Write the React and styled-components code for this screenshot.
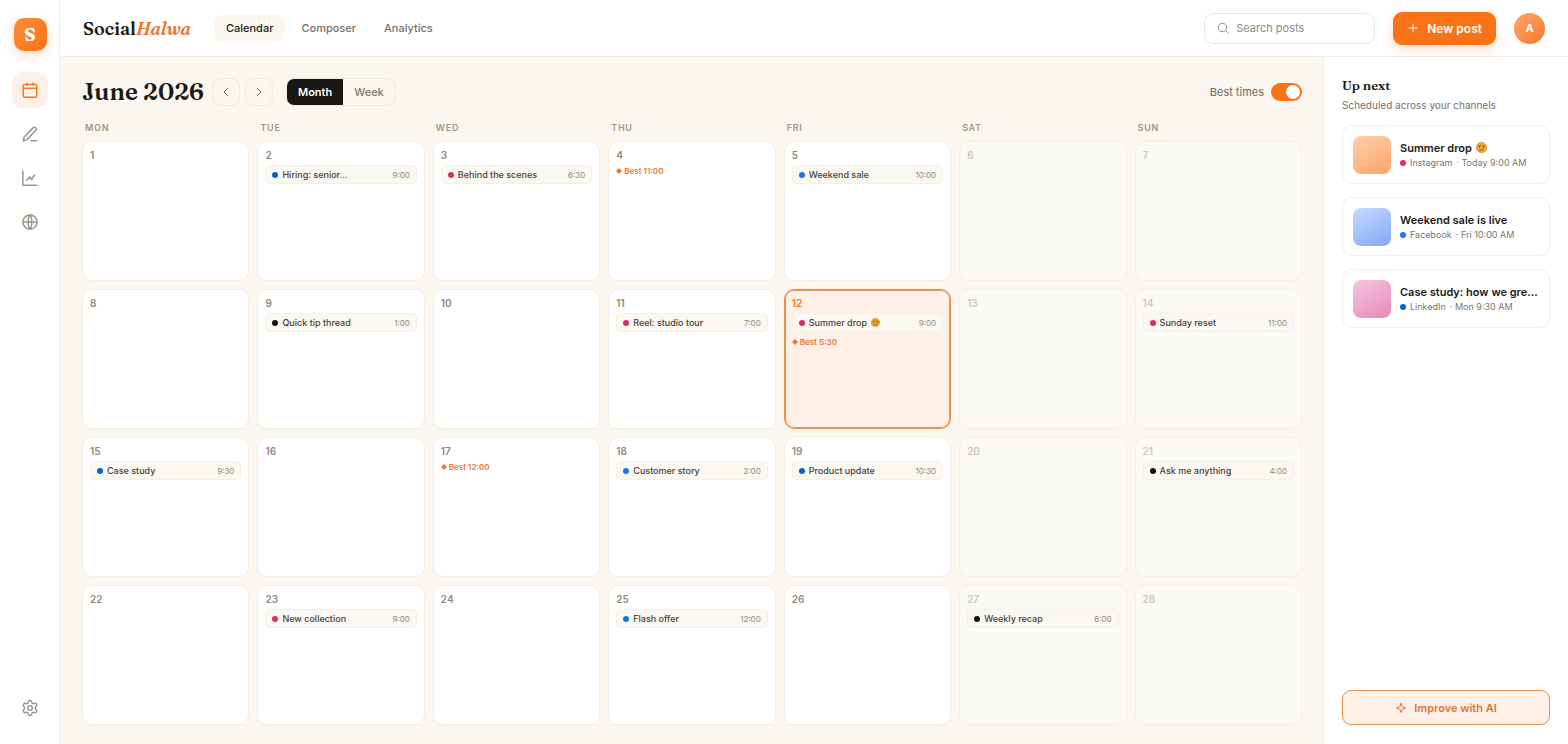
import styled, { createGlobalStyle, css } from "styled-components"
import { Settings } from "lucide-react"

const WEEKDAYS = ["Mon", "Tue", "Wed", "Thu", "Fri", "Sat", "Sun"]

const CHANNELS = {
  instagram: { name: "Instagram", color: "#d62f6b" },
  facebook: { name: "Facebook", color: "#1877e6" },
  linkedin: { name: "LinkedIn", color: "#0a62c2" },
  x: { name: "X", color: "#15130f" },
}

const POSTS = {
  2: { title: "Hiring: senior...", time: "9:00", channel: "linkedin" },
  3: { title: "Behind the scenes", time: "6:30", channel: "instagram" },
  5: { title: "Weekend sale", time: "10:00", channel: "facebook" },
  9: { title: "Quick tip thread", time: "1:00", channel: "x" },
  11: { title: "Reel: studio tour", time: "7:00", channel: "instagram" },
  12: { title: "Summer drop", time: "9:00", channel: "instagram", sunny: true },
  14: { title: "Sunday reset", time: "11:00", channel: "instagram" },
  15: { title: "Case study", time: "9:30", channel: "linkedin" },
  18: { title: "Customer story", time: "2:00", channel: "facebook" },
  19: { title: "Product update", time: "10:30", channel: "linkedin" },
  21: { title: "Ask me anything", time: "4:00", channel: "x" },
  23: { title: "New collection", time: "9:00", channel: "instagram" },
  25: { title: "Flash offer", time: "12:00", channel: "facebook" },
  27: { title: "Weekly recap", time: "6:00", channel: "x" },
}

const BEST_TIMES = { 4: "11:00", 12: "5:30", 17: "12:00" }

const UP_NEXT = [
  {
    title: "Summer drop",
    sunny: true,
    channel: "instagram",
    when: "Today 9:00 AM",
    from: "#fed0b0",
    to: "#fda463",
  },
  {
    title: "Weekend sale is live",
    channel: "facebook",
    when: "Fri 10:00 AM",
    from: "#c6daff",
    to: "#80a8f2",
  },
  {
    title: "Case study: how we gre...",
    channel: "linkedin",
    when: "Mon 9:30 AM",
    from: "#f6c4e0",
    to: "#e58bba",
  },
]

const TODAY = 12

export default function App() {
  return (
    <>
      <GlobalStyle />
      <Shell>
        <Rail />
        <Page>
          <TopBar />
          <Body>
            <Calendar />
            <UpNext />
          </Body>
        </Page>
      </Shell>
    </>
  )
}

const Rail = () => (
  <StyledRail>
    <Logo>S</Logo>
    <RailButton $active aria-label="Calendar">
      <Icon viewBox="0 0 24 24">
        <rect x="3" y="4.5" width="18" height="17" rx="2" />
        <path d="M3 9.5h18M8 2.5v3M16 2.5v3" />
      </Icon>
    </RailButton>
    <RailButton aria-label="Composer">
      <Icon viewBox="0 0 24 24">
        <path d="M13 21h8" />
        <path d="M16.5 3.5a2.4 2.4 0 0 1 3.5 3.2L8 19.5 3 21l1.2-5Z" />
      </Icon>
    </RailButton>
    <RailButton aria-label="Analytics">
      <Icon viewBox="0 0 24 24">
        <path d="M2.5 2.5v19h19" />
        <path d="M7.5 15l4-4.5 2.5 3.5 4-6" />
      </Icon>
    </RailButton>
    <RailButton aria-label="Channels">
      <Icon viewBox="0 0 24 24">
        <circle cx="12" cy="12" r="9.5" />
        <path d="M2.5 12h19M12 2.5c3.2 3 3.2 16 0 19M12 2.5c-3.2 3-3.2 16 0 19" />
      </Icon>
    </RailButton>
    <RailSpacer />
    <RailButton aria-label="Settings">
      <Settings size={18} strokeWidth={2} />
    </RailButton>
  </StyledRail>
)

const TopBar = () => (
  <StyledTopBar>
    <Brand>
      Social<em>Halwa</em>
    </Brand>
    <Tabs>
      <Tab href="#calendar" $active>
        Calendar
      </Tab>
      <Tab href="#composer">Composer</Tab>
      <Tab href="#analytics">Analytics</Tab>
    </Tabs>
    <Search>
      <SmallIcon viewBox="0 0 24 24">
        <circle cx="11" cy="11" r="8.5" />
        <path d="M17.5 17.5l4.5 4.5" />
      </SmallIcon>
      <input type="search" aria-label="Search posts" placeholder="Search posts" />
    </Search>
    <NewPost>
      <SmallIcon viewBox="0 0 24 24">
        <path d="M12 4v16M4 12h16" />
      </SmallIcon>
      New post
    </NewPost>
    <Avatar aria-label="Account">A</Avatar>
  </StyledTopBar>
)

const Calendar = () => (
  <StyledCalendar>
    <Toolbar>
      <Month>June 2026</Month>
      <Arrows>
        <ArrowButton aria-label="Previous month">
          <SmallIcon viewBox="0 0 24 24">
            <path d="M15 5l-7 7 7 7" />
          </SmallIcon>
        </ArrowButton>
        <ArrowButton aria-label="Next month">
          <SmallIcon viewBox="0 0 24 24">
            <path d="M9 5l7 7-7 7" />
          </SmallIcon>
        </ArrowButton>
      </Arrows>
      <Segmented>
        <Segment $active>Month</Segment>
        <Segment>Week</Segment>
      </Segmented>
      <Toggle>
        Best times
        <input type="checkbox" role="switch" defaultChecked />
      </Toggle>
    </Toolbar>
    <Weekdays>
      {WEEKDAYS.map(day => (
        <span key={day}>{day}</span>
      ))}
    </Weekdays>
    <Days>
      {Array.from({ length: 28 }, (_, i) => (
        <Day key={i} day={i + 1} />
      ))}
    </Days>
  </StyledCalendar>
)

const Day = ({ day }) => {
  const post = POSTS[day]
  const best = BEST_TIMES[day]
  const isWeekend = day % 7 === 6 || day % 7 === 0

  return (
    <Cell $weekend={isWeekend} $today={day === TODAY}>
      <DayNumber $weekend={isWeekend} $today={day === TODAY}>
        {day}
      </DayNumber>
      {post && (
        <Post>
          <Dot $color={CHANNELS[post.channel].color} />
          <PostTitle>
            {post.title}
            {post.sunny && <Sun />}
          </PostTitle>
          <PostTime>{post.time}</PostTime>
        </Post>
      )}
      {best && (
        <Best>
          <svg viewBox="0 0 6 6">
            <path d="M3 0l3 3-3 3-3-3Z" />
          </svg>
          Best {best}
        </Best>
      )}
    </Cell>
  )
}

const UpNext = () => (
  <StyledUpNext>
    <UpNextTitle>Up next</UpNextTitle>
    <UpNextText>Scheduled across your channels</UpNextText>
    <Queue>
      {UP_NEXT.map(item => (
        <QueueCard key={item.title}>
          <Thumb $from={item.from} $to={item.to} />
          <QueueInfo>
            <QueueTitle>
              {item.title}
              {item.sunny && <Sun />}
            </QueueTitle>
            <QueueMeta>
              <Dot $color={CHANNELS[item.channel].color} />
              <span>{CHANNELS[item.channel].name}</span>
              <span>· {item.when}</span>
            </QueueMeta>
          </QueueInfo>
        </QueueCard>
      ))}
    </Queue>
    <Improve>
      <SmallIcon viewBox="0 0 24 24">
        <path d="M12 3l2.5 6.5L21 12l-6.5 2.5L12 21l-2.5-6.500L3 12l6.500-2.500Z" />
      </SmallIcon>
      Improve with AI
    </Improve>
  </StyledUpNext>
)

const Sun = () => (
  <StyledSun viewBox="0 0 24 24" role="img" aria-label="sun with face">
    <circle cx="12" cy="12" r="11" fill="#f3ac3a" stroke="#d98a20" strokeWidth="2" />
    <path
      d="M5 9.5l5-2M14 7.5l5 2M7.5 16.5c3 2 6 2 9-1"
      fill="none"
      stroke="#8a5318"
      strokeWidth="2"
      strokeLinecap="round"
    />
    <circle cx="8" cy="11.5" r="1.5" fill="#8a5318" />
    <circle cx="16" cy="11.5" r="1.5" fill="#8a5318" />
  </StyledSun>
)

const GlobalStyle = createGlobalStyle`
  *, *::before, *::after {
    box-sizing: border-box;
  }

  body {
    margin: 0;
    color: #1c1a16;
    background-color: #fbf6f0;
    font-family: Inter, "Liberation Sans", sans-serif;
    font-size: 12px;
  }

  button, input {
    margin: 0;
    padding: 0;
    border: 0;
    font-family: inherit;
  }

  button {
    cursor: pointer;
  }
`

const serif = css`
  font-family: Fraunces, "Liberation Serif", serif;
  font-weight: 600;
`

const Shell = styled.div`
  display: flex;
  min-height: 100vh;
`

const StyledRail = styled.nav`
  display: flex;
  flex-direction: column;
  align-items: center;
  gap: 8px;
  flex: none;
  width: 60px;
  padding: 18px 0;
  background-color: #fff;
  box-shadow: inset -1px 0 #f0ece5;
`

const Logo = styled.div`
  ${serif}
  display: grid;
  place-items: center;
  width: 33px;
  height: 33px;
  margin-bottom: 13px;
  color: #fff;
  background: linear-gradient(135deg, #fb8c3c, #f97316);
  border-radius: 10px;
  box-shadow: 0 4px 12px rgba(249, 115, 22, 0.25);
  font-size: 18px;
  font-weight: 700;
`

const RailButton = styled.button`
  display: grid;
  place-items: center;
  width: 36px;
  height: 36px;
  color: ${props => (props.$active ? "#ee7a34" : "#9b968a")};
  background-color: ${props => (props.$active ? "#fef0e6" : "transparent")};
  border-radius: 10px;
`

const RailSpacer = styled.div`
  flex: 1;
`

const Icon = styled.svg`
  width: 18px;
  height: 18px;
  fill: none;
  stroke: currentColor;
  stroke-width: 2;
  stroke-linecap: round;
  stroke-linejoin: round;
`

const SmallIcon = styled(Icon)`
  flex: none;
  width: 12px;
  height: 12px;
`

const Page = styled.div`
  display: flex;
  flex-direction: column;
  flex: 1;
  min-width: 0;
`

const StyledTopBar = styled.header`
  display: flex;
  align-items: center;
  height: 57px;
  padding: 0 23px;
  background-color: #fff;
  border-bottom: 1px solid #f0ece5;
`

const Brand = styled.div`
  ${serif}
  margin-right: 23px;
  font-size: 18px;

  em {
    color: #ee7430;
  }
`

const Tabs = styled.nav`
  display: flex;
  gap: 4px;
`

const Tab = styled.a`
  padding: 0 12px;
  color: ${props => (props.$active ? "#1c1a16" : "#76716a")};
  background-color: ${props => (props.$active ? "#fbf6f0" : "transparent")};
  border-radius: 8px;
  font-size: 11px;
  font-weight: 500;
  line-height: 27px;
  text-decoration: none;
`

const Search = styled.label`
  display: flex;
  align-items: center;
  gap: 7px;
  width: 171px;
  height: 31px;
  margin-left: auto;
  padding: 0 12px;
  color: #8f8a80;
  border: 1px solid #ece8e1;
  border-radius: 9px;

  input {
    flex: 1;
    min-width: 0;
    background: none;
    color: #1c1a16;
    font-size: 11px;
    outline: none;
  }

  input::placeholder {
    color: #8f8a80;
  }
`

const NewPost = styled.button`
  display: flex;
  align-items: center;
  gap: 8px;
  height: 33px;
  margin: 0 18px;
  padding: 0 14px;
  color: #fff;
  background-color: #f97316;
  border-radius: 9px;
  box-shadow: 0 4px 12px rgba(249, 115, 22, 0.25);
  font-size: 12px;
  font-weight: 600;
`

const Avatar = styled.button`
  width: 31px;
  height: 31px;
  color: #fff;
  background: linear-gradient(135deg, #fda766, #f5782c);
  border-radius: 50%;
  font-size: 11px;
  font-weight: 700;
`

const Body = styled.div`
  display: flex;
  flex: 1;
`

const StyledCalendar = styled.main`
  display: flex;
  flex-direction: column;
  flex: 1;
  min-width: 0;
  padding: 21px 21px 19px 22px;
`

const Toolbar = styled.div`
  display: flex;
  align-items: center;
  height: 28px;
  margin-bottom: 15px;
`

const Month = styled.h1`
  ${serif}
  margin: 0 8px 0 0;
  font-size: 24px;
  line-height: 28px;
`

const Arrows = styled.div`
  display: flex;
  gap: 5px;
  margin-right: 13px;
`

const ArrowButton = styled.button`
  display: grid;
  place-items: center;
  width: 28px;
  height: 28px;
  color: #6b665c;
  background: none;
  border: 1px solid #eee9e1;
  border-radius: 8px;
`

const Segmented = styled.div`
  display: flex;
  overflow: hidden;
  height: 28px;
  border: 1px solid #eee9e1;
  border-radius: 8px;
`

const Segment = styled.button`
  padding: 0 11px;
  color: ${props => (props.$active ? "#fff" : "#7d786e")};
  background-color: ${props => (props.$active ? "#1a1814" : "transparent")};
  font-size: 11px;
  font-weight: ${props => (props.$active ? 600 : 500)};
`

const Toggle = styled.label`
  display: flex;
  align-items: center;
  gap: 7px;
  margin-left: auto;
  color: #6f6a61;
  font-size: 11px;

  input {
    appearance: none;
    width: 31px;
    height: 18px;
    padding: 2px;
    background-color: #d9d4ca;
    border-radius: 9px;
    cursor: pointer;
  }

  input::before {
    content: "";
    display: block;
    width: 14px;
    height: 14px;
    background-color: #fff;
    border-radius: 50%;
  }

  input:checked {
    background-color: #f97316;
  }

  input:checked::before {
    margin-left: auto;
  }
`

const Weekdays = styled.div`
  display: grid;
  grid-template-columns: repeat(7, 1fr);
  gap: 8px;
  margin-bottom: 6px;
  color: #9b968c;
  font-size: 9px;
  font-weight: 600;
  letter-spacing: 0.08em;
  line-height: 14px;
  text-transform: uppercase;

  span {
    padding-left: 3px;
  }
`

const Days = styled.div`
  display: grid;
  grid-template-columns: repeat(7, minmax(0, 1fr));
  grid-auto-rows: 1fr;
  flex: 1;
  gap: 8px;
`

const Cell = styled.div`
  min-height: 80px;
  padding: 6px 7px;
  background-color: ${props => (props.$weekend ? "#fcfaf6" : "#fff")};
  border: 1px solid #f3eee6;
  border-radius: 10px;

  ${props =>
    props.$today &&
    css`
      background-color: #fef0e6;
      border-color: #e6924f;
      box-shadow: inset 0 0 0 1px #e6924f;
    `}
`

const DayNumber = styled.div`
  margin-bottom: 3px;
  color: ${props => (props.$today ? "#e87a35" : props.$weekend ? "#cbc7bf" : "#8d887e")};
  font-size: 10px;
  font-weight: 600;
  line-height: 14px;
`

const Post = styled.div`
  display: flex;
  align-items: center;
  gap: 4px;
  height: 19px;
  padding: 0 6px;
  background-color: #fbf7f1;
  border: 1px solid #f4efe7;
  border-radius: 5px;
`

const Dot = styled.i`
  flex: none;
  width: 6px;
  height: 6px;
  background-color: ${props => props.$color};
  border-radius: 50%;
`

const PostTitle = styled.span`
  flex: 1;
  overflow: hidden;
  color: #45413a;
  font-size: 9px;
  font-weight: 500;
  text-overflow: ellipsis;
  white-space: nowrap;
`

const PostTime = styled.time`
  padding-top: 1px;
  color: #8f8a80;
  font-size: 8px;
`

const Best = styled.div`
  display: flex;
  align-items: center;
  gap: 2px;
  color: #e87a35;
  font-size: 8px;
  font-weight: 600;
  line-height: 12px;

  ${Post} + & {
    margin-top: 4px;
  }

  svg {
    width: 6px;
    height: 6px;
    fill: currentColor;
  }
`

const StyledSun = styled.svg`
  width: 1em;
  height: 1em;
  margin-left: 4px;
  vertical-align: -1px;
`

const StyledUpNext = styled.aside`
  display: flex;
  flex-direction: column;
  flex: none;
  width: 245px;
  padding: 21px 18px 19px;
  background-color: #fff;
  border-left: 1px solid #f0ece5;
`

const UpNextTitle = styled.h2`
  ${serif}
  margin: 0 0 7px;
  font-size: 13px;
  line-height: 14px;
`

const UpNextText = styled.p`
  margin: 0 0 13px;
  color: #76716a;
  font-size: 10px;
  line-height: 13px;
`

const Queue = styled.div`
  display: flex;
  flex-direction: column;
  gap: 13px;
`

const QueueCard = styled.article`
  display: flex;
  align-items: center;
  gap: 9px;
  height: 59px;
  padding: 0 10px;
  border: 1px solid #f1ede7;
  border-radius: 10px;
`

const Thumb = styled.div`
  flex: none;
  width: 38px;
  height: 38px;
  background: linear-gradient(150deg, ${props => props.$from}, ${props => props.$to});
  border-radius: 8px;
`

const QueueInfo = styled.div`
  flex: 1;
  min-width: 0;
`

const QueueTitle = styled.div`
  overflow: hidden;
  font-size: 11px;
  font-weight: 600;
  line-height: 16px;
  text-overflow: ellipsis;
  white-space: nowrap;
`

const QueueMeta = styled.div`
  display: flex;
  align-items: center;
  gap: 4px;
  color: #7a756c;
  font-size: 9px;
  line-height: 14px;
`

const Improve = styled.button`
  display: flex;
  align-items: center;
  justify-content: center;
  gap: 7px;
  height: 35px;
  margin-top: auto;
  color: #d9763a;
  background-color: #fef0e6;
  border: 1px solid #e6924f;
  border-radius: 9px;
  font-size: 11px;
  font-weight: 600;
`
